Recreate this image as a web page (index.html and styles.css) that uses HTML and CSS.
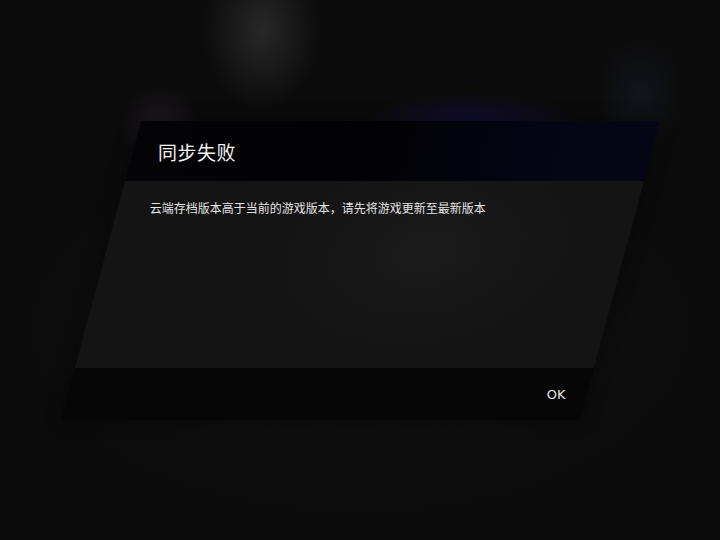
FILE: index.html
```html
<!DOCTYPE html>
<html lang="zh-CN">
<head>
    <meta charset="UTF-8">
    <meta name="viewport" content="width=device-width, initial-scale=1.0">
    <title>同步失败</title>
    <link rel="stylesheet" href="styles.css">
</head>
<body>
    <div class="scene">
        <div class="dialog">
            <div class="dialog-header">
                <h1 class="dialog-title">同步失败</h1>
            </div>
            <div class="dialog-body">
                <p class="dialog-message">云端存档版本高于当前的游戏版本，请先将游戏更新至最新版本</p>
            </div>
            <div class="dialog-footer">
                <button class="dialog-btn" type="button">OK</button>
            </div>
        </div>
    </div>
</body>
</html>
```

FILE: styles.css
```css
html, body {
    margin: 0;
    padding: 0;
    height: 100%;
}
body {
    font-family: "Noto Sans CJK SC", "Noto Sans", sans-serif;
    color: #e8e8e8;
    background-color: #0b0b0b;
    background-image:
        radial-gradient(ellipse 60px 80px at 262px 30px, rgba(52, 52, 52, 0.7), rgba(52, 52, 52, 0) 100%),
        radial-gradient(circle 40px at 160px 125px, rgba(60, 44, 70, 0.4), rgba(60, 44, 70, 0) 100%),
        radial-gradient(ellipse 110px 30px at 470px 122px, rgba(20, 14, 64, 0.7), rgba(20, 14, 64, 0) 100%),
        radial-gradient(ellipse 45px 60px at 640px 95px, rgba(28, 32, 52, 0.45), rgba(28, 32, 52, 0) 100%),
        radial-gradient(ellipse 360px 200px at 360px 330px, rgba(20, 18, 20, 0.8), rgba(20, 18, 20, 0) 100%);
    overflow: hidden;
}
.scene {
    height: 100%;
    display: flex;
    align-items: center;
    justify-content: center;
}

/* slanted panel, rows are counter-skewed so text stays upright */
.dialog {
    width: 519px;
    height: 299px;
    display: flex;
    flex-direction: column;
    transform: skewX(-15deg);
    box-shadow: 0 0 18px rgba(0, 0, 0, 0.35);
}
.dialog-header > *,
.dialog-body > *,
.dialog-footer > * {
    transform: skewX(15deg);
}

.dialog-header {
    height: 60px;
    display: flex;
    align-items: center;
    background: linear-gradient(90deg, #040305 0%, #020204 45%, #040412 75%, #060614 100%);
}
.dialog-title {
    margin: 0 0 0 25px;
    font-size: 19px;
    font-weight: 400;
    color: #f2f2f2;
    letter-spacing: 0.5px;
}

.dialog-body {
    flex: 1;
    background-color: #141415;
    background-image: radial-gradient(ellipse 150px 100px at 320px 70px, rgba(34, 34, 36, 0.5), rgba(34, 34, 36, 0) 100%);
}
.dialog-message {
    margin: 19px 0 0 32px;
    font-size: 12px;
    line-height: 16px;
    color: #e4e4e4;
}

.dialog-footer {
    height: 52px;
    display: flex;
    align-items: center;
    justify-content: flex-end;
    background-color: #060606;
}
.dialog-btn {
    margin-right: 21px;
    padding: 0;
    border: none;
    background: none;
    font-family: "DejaVu Sans", sans-serif;
    font-size: 13px;
    color: #e6e6e6;
    cursor: pointer;
}
```
